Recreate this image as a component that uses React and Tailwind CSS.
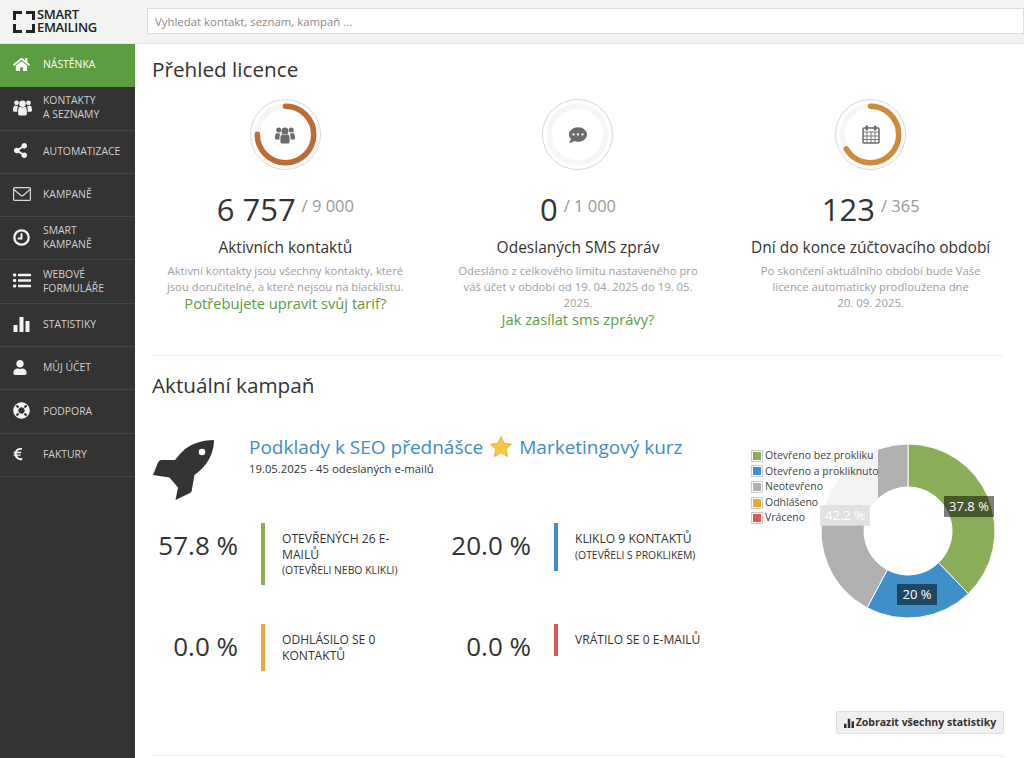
import { FaHome, FaShareAlt, FaUser, FaLifeRing, FaEuroSign, FaCommentDots } from 'react-icons/fa'

function BarsIcon({ className }) {
  return (
    <svg viewBox="0 0 16 16" className={className} fill="currentColor">
      <rect x="0" y="9" width="4" height="7" rx="0.5" />
      <rect x="6" y="1" width="4" height="15" rx="0.5" />
      <rect x="12" y="5" width="4" height="11" rx="0.5" />
    </svg>
  )
}

function UsersIcon({ className }) {
  return (
    <svg viewBox="0 0 20 17" className={className} fill="currentColor">
      <circle cx="3.7" cy="3.6" r="2.5" />
      <circle cx="16.3" cy="3.6" r="2.5" />
      <circle cx="10" cy="4.6" r="3.5" />
      <path d="M0 11c0-3 1-4.5 2.5-4.5 1 .7 2 .7 3 .5-.6 1-1 2.4-1 4.4V13H1.2C.4 13 0 12.3 0 11.5z" />
      <path d="M20 11c0-3-1-4.5-2.5-4.5-1 .7-2 .7-3 .5.6 1 1 2.4 1 4.4V13h3.3c.8 0 1.2-.7 1.2-1.5z" />
      <path d="M5.4 11.8c0-2.6 1-4 2.2-4 1.5 1 3.3 1 4.8 0 1.2 0 2.2 1.4 2.2 4v3.4c0 1-.7 1.8-1.6 1.8H7c-.9 0-1.6-.8-1.6-1.8z" />
    </svg>
  )
}

function ClockIcon({ className }) {
  return (
    <svg viewBox="0 0 18 18" className={className} fill="none" stroke="currentColor">
      <circle cx="9" cy="9" r="7.6" strokeWidth="2.4" />
      <path d="M9 4.5V10H5" strokeWidth="2" />
    </svg>
  )
}

function EnvelopeIcon({ className }) {
  return (
    <svg viewBox="0 0 18 14" className={className} fill="none" stroke="currentColor" strokeWidth="1.2">
      <rect x="0.6" y="0.6" width="16.8" height="12.8" rx="1" />
      <path d="M1 2.5L7.6 8.2c.8.7 2 .7 2.8 0L17 2.5" />
    </svg>
  )
}

function ListIcon({ className }) {
  return (
    <svg viewBox="0 0 18 15" className={className} fill="currentColor">
      <rect x="0" y="0.5" width="3.2" height="3" rx="1" />
      <rect x="0" y="6" width="3.2" height="3" rx="1" />
      <rect x="0" y="11.5" width="3.2" height="3" rx="1" />
      <rect x="5" y="0.7" width="13" height="2.6" rx="0.4" />
      <rect x="5" y="6.2" width="13" height="2.6" rx="0.4" />
      <rect x="5" y="11.7" width="13" height="2.6" rx="0.4" />
    </svg>
  )
}

function RocketIcon({ className }) {
  return (
    <svg viewBox="0 0 62 62" className={className}>
      <path
        fill="currentColor"
        fillRule="evenodd"
        d="M62 0C52 0 41 3 33 9L28 14L23 20L9.5 20C8 20 7 21 6 22.5L1 35L17.5 37.5L26 47.5L23.5 60L38 53C39.5 52 40 50.5 40 49L42.5 35C55 26 62 14 62 0ZM50 8.7a3.3 3.3 0 1 1 0 6.6a3.3 3.3 0 1 1 0-6.6Z"
      />
    </svg>
  )
}

function CalendarIcon() {
  return (
    <svg viewBox="0 0 18 19" className="w-[18px] h-[19px]" fill="none" stroke="#6b6b6b">
      <rect x="1" y="3" width="16" height="15" rx="1" strokeWidth="1.5" />
      <path d="M1 7h16M1 11h16M1 14.5h16M5 7v11M9 7v11M13 7v11" strokeWidth="0.9" />
      <rect x="3.5" y="0.5" width="2.6" height="5" rx="1.2" fill="#6b6b6b" stroke="none" />
      <rect x="11.9" y="0.5" width="2.6" height="5" rx="1.2" fill="#6b6b6b" stroke="none" />
    </svg>
  )
}

const navItems = [
  { label: ['Nástěnka'], icon: <FaHome className="w-[17px] h-[17px]" />, active: true },
  { label: ['Kontakty', 'a seznamy'], icon: <UsersIcon className="w-[19px] h-[17px]" /> },
  { label: ['Automatizace'], icon: <FaShareAlt className="w-[15px] h-[15px]" /> },
  { label: ['Kampaně'], icon: <EnvelopeIcon className="w-[18px] h-[14px] text-[#d8d8d8]" /> },
  { label: ['Smart', 'kampaně'], icon: <ClockIcon className="w-[17px] h-[17px]" /> },
  { label: ['Webové', 'formuláře'], icon: <ListIcon className="w-[18px] h-[15px]" /> },
  { label: ['Statistiky'], icon: <BarsIcon className="w-[17px] h-[16px]" /> },
  { label: ['Můj účet'], icon: <FaUser className="w-[14px] h-[15px]" /> },
  { label: ['Podpora'], icon: <FaLifeRing className="w-[17px] h-[17px]" /> },
  { label: ['Faktury'], icon: <FaEuroSign className="w-[10px] h-[14px]" /> },
]

const licence = [
  {
    value: '6 757', total: '/ 9 000', title: 'Aktivních kontaktů', ratio: 0.75, color: '#bf6c32',
    icon: <UsersIcon className="w-[20px] h-[18px] text-[#6b6b6b]" />,
    lines: ['Aktivní kontakty jsou všechny kontakty, které', 'jsou doručitelné, a které nejsou na blacklistu.'],
    link: 'Potřebujete upravit svůj tarif?',
  },
  {
    value: '0', total: '/ 1 000', title: 'Odeslaných SMS zpráv', ratio: 0, color: '#bf6c32',
    icon: <FaCommentDots className="w-[18px] h-[18px] text-[#6b6b6b]" />,
    lines: ['Odesláno z celkového limitu nastaveného pro', 'váš účet v období od 19. 04. 2025 do 19. 05.', '2025.'],
    link: 'Jak zasílat sms zprávy?',
  },
  {
    value: '123', total: '/ 365', title: 'Dní do konce zúčtovacího období', ratio: 0.663, color: '#cf8a3c',
    icon: <CalendarIcon />,
    lines: ['Po skončení aktuálního období bude Vaše', 'licence automaticky prodloužena dne', '20. 09. 2025.'],
  },
]

const stats = [
  { value: '57.8 %', color: 'bg-[#8aae57]', height: 'h-[62px]', main: ['OTEVŘENÝCH 26 E-', 'MAILŮ'], sub: '(OTEVŘELI NEBO KLIKLI)' },
  { value: '20.0 %', color: 'bg-[#3f8fc9]', height: 'h-[48px]', main: ['KLIKLO 9 KONTAKTŮ'], sub: '(OTEVŘELI S PROKLIKEM)' },
  { value: '0.0 %', color: 'bg-[#e6a93c]', height: 'h-[47px]', main: ['ODHLÁSILO SE 0', 'KONTAKTŮ'] },
  { value: '0.0 %', color: 'bg-[#e05555]', height: 'h-[32px]', main: ['VRÁTILO SE 0 E-MAILŮ'] },
]

const legend = [
  ['Otevřeno bez prokliku', 'bg-[#8aae57]'],
  ['Otevřeno a prokliknuto', 'bg-[#3f8fc9]'],
  ['Neotevřeno', 'bg-[#b0b0b0]'],
  ['Odhlášeno', 'bg-[#e6a93c]'],
  ['Vráceno', 'bg-[#e05555]'],
]

function Ring({ ratio, color, children }) {
  const r = 28.2
  const c = 2 * Math.PI * r
  return (
    <div className="relative w-[71px] h-[71px] rounded-full border border-[#d8d8d8] flex items-center justify-center">
      <svg viewBox="0 0 71 71" className="absolute -inset-px w-[71px] h-[71px]">
        <circle cx="35.5" cy="35.5" r={r} fill="none" stroke="#f6f7f2" strokeWidth="5.5" />
        {ratio > 0 && (
          <circle
            cx="35.5" cy="35.5" r={r} fill="none" stroke={color} strokeWidth="5.5" strokeLinecap="round"
            strokeDasharray={`${c * ratio} ${c}`} transform="rotate(-90 35.5 35.5)"
          />
        )}
      </svg>
      {children}
    </div>
  )
}

function slice(from, to, ro, ri) {
  const pt = (a, r) => {
    const t = (a * 360 - 90) * Math.PI / 180
    return `${(90 + r * Math.cos(t)).toFixed(2)} ${(90 + r * Math.sin(t)).toFixed(2)}`
  }
  const large = to - from > 0.5 ? 1 : 0
  return `M${pt(from, ro)} A${ro} ${ro} 0 ${large} 1 ${pt(to, ro)} L${pt(to, ri)} A${ri} ${ri} 0 ${large} 0 ${pt(from, ri)} Z`
}

function Donut() {
  return (
    <div className="relative w-[273px] h-[190px] shrink-0">
      <svg viewBox="0 0 180 180" className="absolute left-[68px] top-0 w-[180px] h-[180px]">
        <path d={slice(0, 0.378, 87, 44)} fill="#8aae57" stroke="#fff" strokeWidth="1" />
        <path d={slice(0.378, 0.578, 87, 44)} fill="#3f8fc9" stroke="#fff" strokeWidth="1" />
        <path d={slice(0.578, 1, 87, 44)} fill="#b0b0b0" stroke="#fff" strokeWidth="1" />
      </svg>
      <div className="absolute -left-px top-[7px] w-[129px] h-[77px] bg-white/85 pl-[2px]">
        {legend.map(([label, color]) => (
          <div key={label} className="flex items-center h-[15.6px] gap-[2px] text-[10.5px] text-[#444] whitespace-nowrap">
            <span className="w-[12px] h-[12px] shrink-0 border border-[#ccc] p-[1px] flex"><span className={`flex-1 ${color}`} /></span>
            {label}
          </div>
        ))}
      </div>
      <span className="absolute left-[194px] top-[55px] w-[50px] text-center bg-black/50 text-white text-[13px] leading-[21px]">37.8 %</span>
      <span className="absolute left-[147px] top-[143px] w-[40px] text-center bg-black/50 text-white text-[13px] leading-[21px]">20 %</span>
      <span className="absolute left-[70px] top-[64px] w-[50px] text-center bg-[#dcdcdc]/80 text-white text-[13px] leading-[21px]">42.2 %</span>
    </div>
  )
}

export default function App() {
  return (
    <div className="h-screen overflow-hidden bg-white text-[#333] font-['Open_Sans',sans-serif] flex flex-col">
      <header className="h-[44px] shrink-0 bg-[#f3f3f3] border-b border-[#e2e2e2] flex items-start pl-[13px] pt-[8px]">
        <div className="w-[134px] flex items-center gap-[2px] pt-[2px]">
          <svg viewBox="0 0 22 22" className="w-[22px] h-[22px] text-[#222]" fill="none" stroke="currentColor" strokeWidth="3">
            <path d="M9 1.5H1.5V9M13 1.5h7.5V9M1.5 13v7.5H9M20.5 13v7.5H13" />
          </svg>
          <div className="text-[13px] leading-[12.5px] font-semibold text-[#222] tracking-tight -mt-[2px]">
            <div>SMART</div>
            <div>EMAILING</div>
          </div>
        </div>
        <input
          placeholder="Vyhledat kontakt, seznam, kampaň ..."
          className="flex-1 h-[26px] bg-white border border-[#ddd] px-[7px] text-[11.4px] outline-none placeholder:text-[#8a8a8a]"
        />
      </header>

      <div className="flex flex-1 min-h-0">
        <nav className="w-[135px] shrink-0 bg-[#333]">
          {navItems.map((item) => (
            <div
              key={item.label[0]}
              className={`h-[43.3px] flex items-center border-b pb-[2px] ${item.active ? 'bg-[#5c9c43] border-[#5c9c43] text-white' : 'border-[#444] text-[#d0d0d0]'}`}
            >
              <span className={`w-[43px] shrink-0 flex pl-[13px] ${item.active ? 'text-white' : 'text-[#f2f2f2]'}`}>{item.icon}</span>
              <span className="text-[10.4px] leading-[14px] uppercase">
                {item.label.map((l) => <div key={l}>{l}</div>)}
              </span>
            </div>
          ))}
        </nav>

        <main className="flex-1 min-w-0 pl-[17px] pr-[20px]">
          <h2 className="text-[20.7px] leading-[28px] mt-[11px] text-[#333]">Přehled licence</h2>
          <div className="grid grid-cols-3 -ml-[13px] -mr-[13px] mt-[16px] h-[256px]">
            {licence.map((item) => (
              <div key={item.title} className="flex flex-col items-center text-center">
                <Ring ratio={item.ratio} color={item.color}>{item.icon}</Ring>
                <div className="mt-[17px] flex items-start gap-[6px] h-[44px]">
                  <span className="text-[31px] leading-[44px] text-[#333]">{item.value}</span>
                  <span className="text-[16.5px] leading-[22px] mt-[8px] text-[#999]">{item.total}</span>
                </div>
                <div className="mt-[6px] text-[15.5px] leading-[20px] text-[#333] whitespace-nowrap">{item.title}</div>
                <div className="mt-[6px] text-[11.3px] leading-[16px] text-[#a0a0a0]">
                  {item.lines.map((l) => <div key={l} className="whitespace-nowrap">{l}</div>)}
                </div>
                {item.link && <a className="text-[14.7px] leading-[17px] text-[#5c9c43]">{item.link}</a>}
              </div>
            ))}
          </div>
          <hr className="border-[#eeeeea]" />

          <h2 className="text-[20.7px] leading-[28px] mt-[15px] text-[#333]">Aktuální kampaň</h2>

          <div className="flex mt-[39px]">
            <div className="w-[596px] shrink-0">
              <div className="flex h-[85px]">
                <RocketIcon className="w-[62px] h-[62px] text-[#333] mt-[2px]" />
                <div className="ml-[35px]">
                  <div className="text-[19px] leading-[26px] text-[#428bca] whitespace-nowrap flex items-center gap-[6px] -mt-[4px]">
                    Podklady k SEO přednášce
                    <svg viewBox="0 0 24 24" className="w-[24px] h-[24px]">
                      <path d="M12 1.5l3.2 6.8 7.3.9-5.4 5 1.5 7.3L12 17.8l-6.6 3.7 1.5-7.3-5.4-5 7.3-.9z" fill="#f6c644" stroke="#d9a93a" strokeWidth="0.8" />
                    </svg>
                    Marketingový kurz
                  </div>
                  <div className="text-[11.3px] leading-[18px] text-[#333]">19.05.2025 - 45 odeslaných e-mailů</div>
                </div>
              </div>

              <div className="grid grid-cols-[293px_293px] grid-rows-[101px_90px]">
                {stats.map((s, i) => (
                  <div key={i} className="flex items-start">
                    <div className="w-[86px] text-right text-[26px] leading-[44px] text-[#333] whitespace-nowrap">{s.value}</div>
                    <div className={`w-[4px] ml-[23px] ${s.height} ${s.color}`} />
                    <div className="ml-[17px] mt-[8px] text-[#333] whitespace-nowrap">
                      {s.main.map((m) => <div key={m} className="text-[12.1px] leading-[15.5px]">{m}</div>)}
                      {s.sub && <div className="text-[10.4px] leading-[16px]">{s.sub}</div>}
                    </div>
                  </div>
                ))}
              </div>
            </div>
            <div className="mt-[3px] ml-[2px]">
              <Donut />
            </div>
          </div>

          <div className="flex justify-end mt-[-3px] h-[44px]">
            <button className="h-[23px] w-[168px] bg-[#f0f0f0] border border-[#e0e0e0] rounded-[2px] text-[10.5px] font-bold text-[#333] flex items-center justify-center gap-[2px]">
              <BarsIcon className="w-[10px] h-[10px]" />
              Zobrazit všechny statistiky
            </button>
          </div>
          <hr className="border-[#eeeeea]" />
        </main>
      </div>
    </div>
  )
}
